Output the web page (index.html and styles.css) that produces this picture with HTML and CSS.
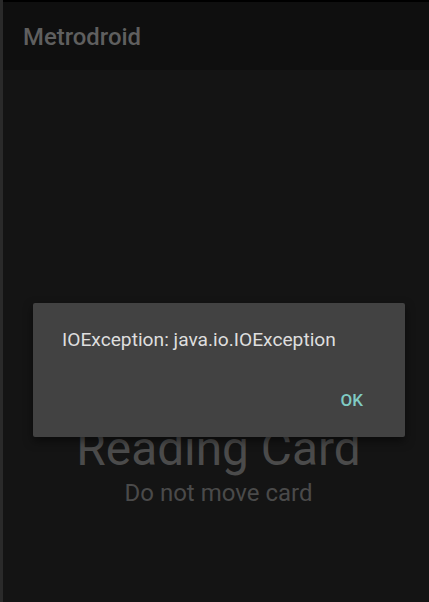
FILE: index.html
```html
<!DOCTYPE html>
<html lang="en">
<head>
<meta charset="utf-8">
<title>Metrodroid</title>
<link rel="stylesheet" href="styles.css">
</head>
<body>
<div class="screen">
  <div class="edge"></div>
  <div class="main">
    <div class="statusbar"></div>
    <header class="appbar"><span class="title">Metrodroid</span></header>
    <section class="content">
      <div class="reading">Reading Card</div>
      <div class="hint">Do not move card</div>
    </section>
  </div>
  <div class="dialog" role="dialog">
    <div class="message">IOException: java.io.IOException</div>
    <div class="actions"><span class="btn">OK</span></div>
  </div>
</div>
</body>
</html>
```

FILE: styles.css
```css
html, body {
  margin: 0;
  padding: 0;
  background: #141414;
}
.screen {
  position: relative;
  width: 429px;
  height: 602px;
  display: flex;
  overflow: hidden;
  font-family: Roboto, "Noto Sans", sans-serif;
}
.edge {
  width: 3px;
  flex: none;
  background: #2a2a2a;
}
.main {
  flex: 1;
  display: flex;
  flex-direction: column;
}
.statusbar {
  height: 2px;
  background: #000;
}
.appbar {
  height: 68px;
  background: #0f0f0f;
  display: flex;
  align-items: flex-start;
  padding-left: 20px;
  box-sizing: border-box;
}
.title {
  margin-top: 21px;
  font-size: 23.9px;
  line-height: 28px;
  font-weight: 500;
  color: #5f5f5f;
}
.content {
  flex: 1;
  background: #141414;
  display: flex;
  flex-direction: column;
  align-items: center;
  padding-top: 351px;
  padding-left: 5px;
}
.reading {
  font-size: 47.8px;
  line-height: 56px;
  color: #4b4b4b;
}
.hint {
  margin-top: 2px;
  font-size: 24px;
  line-height: 28px;
  color: #4a4a4a;
}
.dialog {
  position: absolute;
  left: 33px;
  top: 303px;
  width: 372px;
  height: 134px;
  box-sizing: border-box;
  background: #424242;
  border-radius: 2px;
  box-shadow: 0 4px 10px rgba(0,0,0,0.5);
  padding: 25px 42px 0 29px;
  display: flex;
  flex-direction: column;
}
.message {
  font-size: 19.2px;
  line-height: 23px;
  color: #dedede;
}
.actions {
  margin-top: 39px;
  display: flex;
  justify-content: flex-end;
}
.btn {
  font-size: 17px;
  line-height: 20px;
  font-weight: 500;
  color: #80cbc4;
}
```
